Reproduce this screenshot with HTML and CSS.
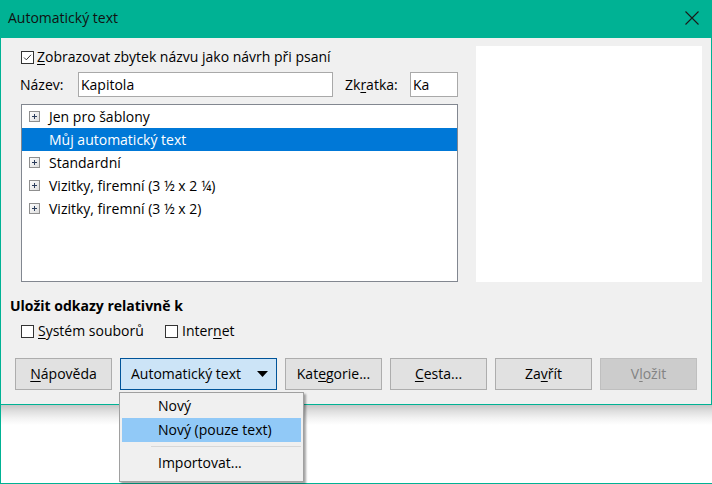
FILE: index.html
```html
<!DOCTYPE html>
<html lang="cs">
<head>
<meta charset="utf-8">
<title>Automatický text</title>
<link rel="stylesheet" href="styles.css">
</head>
<body>
<div class="screen">
  <div class="dialog">
    <div class="titlebar">
      <span class="title">Automatický text</span>
      <svg class="close" width="14" height="14" viewBox="0 0 14 14"><path d="M0.5 0.5 L13.5 13.5 M13.5 0.5 L0.5 13.5" stroke="#1a1a1a" stroke-width="1.1" fill="none"/></svg>
    </div>
    <div class="body">
      <div class="top">
        <div class="left">
          <div class="check-row">
            <span class="cb"><svg width="13" height="13" viewBox="0 0 13 13"><rect x="0.5" y="0.5" width="12" height="12" fill="#fff" stroke="#333"/><polyline points="3,6.5 5.3,8.8 10,3.8" fill="none" stroke="#333" stroke-width="1"/></svg></span>
            <span><u>Z</u>obrazovat zbytek názvu jako návrh při psaní</span>
          </div>
          <div class="name-row">
            <span class="lbl-name">Název:</span>
            <div class="field field-name">Kapitola</div>
            <span class="lbl-short">Zk<u>r</u>atka:</span>
            <div class="field field-short">Ka</div>
          </div>
          <div class="tree">
            <div class="row"><span class="plus"><svg width="11" height="11" viewBox="0 0 11 11"><defs><linearGradient id="g1" x1="0" y1="0" x2="1" y2="1"><stop offset="0" stop-color="#ffffff"/><stop offset="1" stop-color="#dcdcdc"/></linearGradient></defs><rect x="0.5" y="0.5" width="10" height="10" fill="url(#g1)" stroke="#8f8f8f"/><path d="M3 5.5 H8 M5.5 3 V8" stroke="#2b3d5c" stroke-width="1"/></svg></span>Jen pro šablony</div>
            <div class="row selected"><span class="plus"></span>Můj automatický text</div>
            <div class="row"><span class="plus"><svg width="11" height="11" viewBox="0 0 11 11"><rect x="0.5" y="0.5" width="10" height="10" fill="url(#g1)" stroke="#8f8f8f"/><path d="M3 5.5 H8 M5.5 3 V8" stroke="#2b3d5c" stroke-width="1"/></svg></span>Standardní</div>
            <div class="row"><span class="plus"><svg width="11" height="11" viewBox="0 0 11 11"><rect x="0.5" y="0.5" width="10" height="10" fill="url(#g1)" stroke="#8f8f8f"/><path d="M3 5.5 H8 M5.5 3 V8" stroke="#2b3d5c" stroke-width="1"/></svg></span>Vizitky, firemní (3 ½ x 2 ¼)</div>
            <div class="row"><span class="plus"><svg width="11" height="11" viewBox="0 0 11 11"><rect x="0.5" y="0.5" width="10" height="10" fill="url(#g1)" stroke="#8f8f8f"/><path d="M3 5.5 H8 M5.5 3 V8" stroke="#2b3d5c" stroke-width="1"/></svg></span>Vizitky, firemní (3 ½ x 2)</div>
          </div>
        </div>
        <div class="preview"></div>
      </div>
      <div class="heading">Uložit odkazy relativně k</div>
      <div class="checks">
        <div class="check-item first">
          <span class="cb"><svg width="13" height="13" viewBox="0 0 13 13"><rect x="0.5" y="0.5" width="12" height="12" fill="#fff" stroke="#333"/></svg></span>
          <span><u>S</u>ystém souborů</span>
        </div>
        <div class="check-item">
          <span class="cb"><svg width="13" height="13" viewBox="0 0 13 13"><rect x="0.5" y="0.5" width="12" height="12" fill="#fff" stroke="#333"/></svg></span>
          <span>Inter<u>n</u>et</span>
        </div>
      </div>
      <div class="buttons">
        <div class="btn"><u>N</u>ápověda</div>
        <div class="btn btn-menu"><span>Automatický text</span><svg width="11" height="6" viewBox="0 0 11 6"><path d="M0 0 H11 L5.5 6 Z" fill="#000"/></svg></div>
        <div class="btn">Kat<u>e</u>gorie...</div>
        <div class="btn"><u>C</u>esta...</div>
        <div class="btn">Za<u>v</u>řít</div>
        <div class="btn btn-disabled">V<u>l</u>ožit</div>
      </div>
    </div>
  </div>
  <div class="desktop"></div>
  <div class="menu">
    <div class="menu-item">Nový</div>
    <div class="menu-item active">Nový (pouze text)</div>
    <div class="menu-sep"></div>
    <div class="menu-item">Importovat...</div>
  </div>
</div>
</body>
</html>
```
FILE: styles.css
```css
html, body {
  margin: 0;
  padding: 0;
  background: #ffffff;
}
body {
  font-family: "Open Sans", "Noto Sans", sans-serif;
  font-size: 14px;
  color: #000;
}
u {
  text-decoration: underline;
  text-underline-offset: 2px;
  text-decoration-thickness: 1px;
}
.screen {
  position: relative;
  width: 712px;
  height: 484px;
  display: flex;
  flex-direction: column;
  overflow: hidden;
}
.dialog {
  height: 405px;
  box-sizing: border-box;
  border: 1px solid #00b294;
  border-top: 0;
  background: #f0f0f0;
  display: flex;
  flex-direction: column;
}
.titlebar {
  height: 38px;
  flex: none;
  background: #00b294;
  display: flex;
  align-items: center;
  justify-content: space-between;
  padding: 0 12px 0 7px;
}
.title {
  color: #111;
  line-height: 20px;
  margin-top: -2px;
}
.close {
  display: block;
  margin-top: -3px;
}
.body {
  padding: 8px 9px 0 9px;
}
.top {
  display: flex;
  margin-left: 11px;
}
.left {
  width: 437px;
  display: flex;
  flex-direction: column;
}
.check-row {
  margin-top: 1px;
  height: 20px;
  line-height: 20px;
  display: flex;
  align-items: center;
}
.cb {
  display: block;
  width: 13px;
  height: 13px;
  margin-right: 3px;
}
.cb svg {
  display: block;
}
.name-row {
  margin-top: 5px;
  height: 25px;
  display: flex;
  align-items: center;
}
.lbl-name {
  width: 57px;
  margin-left: -1px;
}
.lbl-short {
  width: 65px;
  margin-left: 12px;
}
.field {
  height: 25px;
  box-sizing: border-box;
  border: 1px solid #a9a9a9;
  background: #fff;
  line-height: 23px;
  padding-left: 2px;
}
.field-name {
  width: 255px;
  margin-left: 1px;
}
.field-short {
  width: 48px;
}
.tree {
  margin-top: 7px;
  height: 178px;
  box-sizing: border-box;
  border: 1px solid #828790;
  background: #fff;
}
.row {
  height: 23px;
  line-height: 23px;
  display: flex;
  align-items: center;
  padding-left: 7px;
}
.row.selected {
  background: #0078d7;
  color: #fff;
}
.plus {
  display: block;
  width: 11px;
  height: 11px;
  margin-right: 9px;
}
.plus svg {
  display: block;
}
.preview {
  width: 226px;
  height: 236px;
  margin-left: 18px;
  background: #fff;
}
.heading {
  margin-top: 14px;
  font-weight: 700;
  line-height: 20px;
}
.checks {
  margin-top: 5px;
  margin-left: 11px;
  height: 20px;
  display: flex;
  align-items: center;
}
.check-item {
  display: flex;
  align-items: center;
  line-height: 20px;
}
.check-item .cb {
  margin-right: 4px;
}
.check-item.first {
  width: 144px;
}
.buttons {
  margin-top: 17px;
  margin-left: 5px;
  display: flex;
  gap: 8px;
}
.btn {
  width: 97px;
  height: 32px;
  box-sizing: border-box;
  border: 1px solid #adadad;
  background: #e1e1e1;
  display: flex;
  align-items: center;
  justify-content: center;
  line-height: 20px;
}
.btn-menu {
  width: 157px;
  background: #cce4f7;
  border-color: #005499;
  justify-content: space-between;
  padding: 0 8px 0 10px;
}
.btn-menu svg {
  display: block;
}
.btn-disabled {
  background: #cccccc;
  border-color: #bfbfbf;
  color: #838383;
}
.desktop {
  flex: 1;
  box-sizing: border-box;
  border-left: 1px solid #00b294;
  border-bottom: 1px solid #00b294;
  background: linear-gradient(to bottom, #c6c6c6 0px, #dedede 6px, #f2f2f2 13px, #ffffff 20px);
}
.menu {
  position: absolute;
  left: 119px;
  top: 392px;
  width: 185px;
  height: 90px;
  box-sizing: border-box;
  border: 1px solid #a0a0a0;
  background: #f0f0f0;
  padding: 1px 2px 0 2px;
  box-shadow: 2px 2px 2px rgba(0, 0, 0, 0.35);
}
.menu-item {
  height: 24px;
  line-height: 24px;
  padding-left: 36px;
}
.menu-item.active {
  background: #91c9f7;
}
.menu-sep {
  height: 9px;
  position: relative;
}
.menu-sep::after {
  content: "";
  position: absolute;
  left: 29px;
  right: 0;
  top: 4px;
  height: 1px;
  background: #d7d7d7;
}
```
